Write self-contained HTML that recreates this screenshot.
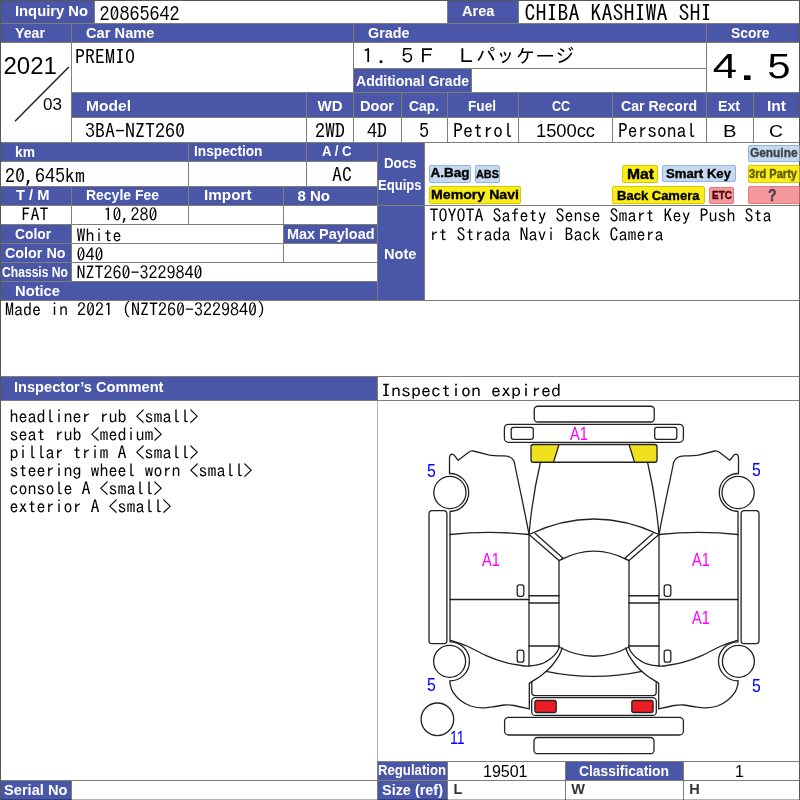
<!DOCTYPE html>
<html lang="en">
<head>
<meta charset="utf-8">
<title>Auction Sheet 20865642</title>
<style>
html,body{margin:0;padding:0;background:#fff}
#sheet{position:relative;width:800px;height:800px;overflow:hidden;will-change:transform}
.c{position:absolute;box-sizing:border-box;border:1px solid #7f7d74}
.h{background:#4a57a8}
.w{background:#fff}
.t{position:absolute;white-space:pre;line-height:1;transform-origin:0 0;display:block}
.b{position:absolute;box-sizing:border-box;border-radius:2px;border:1px solid}
svg{position:absolute;left:0;top:0}
#frame{position:absolute;left:0;top:0;width:800px;height:800px;box-sizing:border-box;border:1px solid rgba(0,0,20,.3);pointer-events:none}
</style>
</head>
<body>
<div id="sheet">
<div class="c h" style="left:0px;top:0px;width:95px;height:24px"></div>
<div class="c w" style="left:94px;top:0px;width:354px;height:24px"></div>
<div class="c h" style="left:447px;top:0px;width:72px;height:24px"></div>
<div class="c w" style="left:518px;top:0px;width:282px;height:24px"></div>
<div class="c h" style="left:0px;top:23px;width:72px;height:20px"></div>
<div class="c h" style="left:71px;top:23px;width:283px;height:20px"></div>
<div class="c h" style="left:353px;top:23px;width:354px;height:20px"></div>
<div class="c h" style="left:706px;top:23px;width:94px;height:20px"></div>
<div class="c w" style="left:0px;top:42px;width:72px;height:101px"></div>
<div class="c w" style="left:71px;top:42px;width:283px;height:51px"></div>
<div class="c w" style="left:353px;top:42px;width:354px;height:27px"></div>
<div class="c h" style="left:353px;top:68px;width:119px;height:25px"></div>
<div class="c w" style="left:471px;top:68px;width:236px;height:25px"></div>
<div class="c w" style="left:706px;top:42px;width:94px;height:51px"></div>
<div class="c h" style="left:71px;top:92px;width:236px;height:26px"></div>
<div class="c h" style="left:306px;top:92px;width:48px;height:26px"></div>
<div class="c h" style="left:353px;top:92px;width:49px;height:26px"></div>
<div class="c h" style="left:401px;top:92px;width:47px;height:26px"></div>
<div class="c h" style="left:447px;top:92px;width:72px;height:26px"></div>
<div class="c h" style="left:518px;top:92px;width:95px;height:26px"></div>
<div class="c h" style="left:612px;top:92px;width:95px;height:26px"></div>
<div class="c h" style="left:706px;top:92px;width:48px;height:26px"></div>
<div class="c h" style="left:753px;top:92px;width:47px;height:26px"></div>
<div class="c w" style="left:71px;top:117px;width:236px;height:26px"></div>
<div class="c w" style="left:306px;top:117px;width:48px;height:26px"></div>
<div class="c w" style="left:353px;top:117px;width:49px;height:26px"></div>
<div class="c w" style="left:401px;top:117px;width:47px;height:26px"></div>
<div class="c w" style="left:447px;top:117px;width:72px;height:26px"></div>
<div class="c w" style="left:518px;top:117px;width:95px;height:26px"></div>
<div class="c w" style="left:612px;top:117px;width:95px;height:26px"></div>
<div class="c w" style="left:706px;top:117px;width:48px;height:26px"></div>
<div class="c w" style="left:753px;top:117px;width:47px;height:26px"></div>
<div class="c h" style="left:0px;top:142px;width:189px;height:20px"></div>
<div class="c h" style="left:188px;top:142px;width:119px;height:20px"></div>
<div class="c h" style="left:306px;top:142px;width:72px;height:20px"></div>
<div class="c w" style="left:0px;top:161px;width:189px;height:26px"></div>
<div class="c w" style="left:188px;top:161px;width:119px;height:26px"></div>
<div class="c w" style="left:306px;top:161px;width:72px;height:26px"></div>
<div class="c h" style="left:0px;top:186px;width:72px;height:20px"></div>
<div class="c h" style="left:71px;top:186px;width:118px;height:20px"></div>
<div class="c h" style="left:188px;top:186px;width:96px;height:20px"></div>
<div class="c h" style="left:283px;top:186px;width:95px;height:20px"></div>
<div class="c w" style="left:0px;top:205px;width:72px;height:20px"></div>
<div class="c w" style="left:71px;top:205px;width:118px;height:20px"></div>
<div class="c w" style="left:188px;top:205px;width:96px;height:20px"></div>
<div class="c w" style="left:283px;top:205px;width:95px;height:20px"></div>
<div class="c h" style="left:0px;top:224px;width:72px;height:20px"></div>
<div class="c w" style="left:71px;top:224px;width:213px;height:20px"></div>
<div class="c h" style="left:283px;top:224px;width:95px;height:20px"></div>
<div class="c h" style="left:0px;top:243px;width:72px;height:20px"></div>
<div class="c w" style="left:71px;top:243px;width:213px;height:20px"></div>
<div class="c w" style="left:283px;top:243px;width:95px;height:20px"></div>
<div class="c h" style="left:0px;top:262px;width:72px;height:20px"></div>
<div class="c w" style="left:71px;top:262px;width:307px;height:20px"></div>
<div class="c h" style="left:0px;top:281px;width:378px;height:20px"></div>
<div class="c h" style="left:377px;top:142px;width:48px;height:64px"></div>
<div class="c h" style="left:377px;top:205px;width:48px;height:96px"></div>
<div class="c w" style="left:424px;top:142px;width:376px;height:64px"></div>
<div class="c w" style="left:424px;top:205px;width:376px;height:96px"></div>
<div class="c w" style="left:0px;top:300px;width:800px;height:77px"></div>
<div class="c h" style="left:0px;top:376px;width:378px;height:25px"></div>
<div class="c w" style="left:0px;top:400px;width:378px;height:381px"></div>
<div class="c w" style="left:377px;top:376px;width:423px;height:25px"></div>
<div class="c w" style="left:377px;top:400px;width:423px;height:362px"></div>
<div class="c h" style="left:0px;top:780px;width:72px;height:21px"></div>
<div class="c w" style="left:71px;top:780px;width:307px;height:21px"></div>
<div class="c h" style="left:377px;top:761px;width:71px;height:20px"></div>
<div class="c w" style="left:447px;top:761px;width:119px;height:20px"></div>
<div class="c h" style="left:565px;top:761px;width:119px;height:20px"></div>
<div class="c w" style="left:683px;top:761px;width:117px;height:20px"></div>
<div class="c h" style="left:377px;top:780px;width:71px;height:21px"></div>
<div class="c w" style="left:447px;top:780px;width:119px;height:21px"></div>
<div class="c w" style="left:565px;top:780px;width:119px;height:21px"></div>
<div class="c w" style="left:683px;top:780px;width:117px;height:21px"></div>
<!-- overlay lines -->
<svg width="800" height="800" viewBox="0 0 800 800" style="pointer-events:none">
<line x1="15" y1="121.3" x2="68.8" y2="67" stroke="#222" stroke-width="1.5"/>
<rect x="377" y="401" width="1" height="360" fill="#b4b4b4"/>
</svg>
<div class="b" style="left:428.5px;top:165px;width:42.7px;height:17.6px;background:#c5d9f1;border-color:#94b3de"></div>
<div class="b" style="left:474.8px;top:165px;width:25.4px;height:17.6px;background:#c5d9f1;border-color:#94b3de"></div>
<div class="b" style="left:428.5px;top:186px;width:92.7px;height:17.6px;background:#fbec1c;border-color:#d8ca00"></div>
<div class="b" style="left:621.5px;top:165.2px;width:36.5px;height:17.4px;background:#fbec1c;border-color:#d8ca00"></div>
<div class="b" style="left:661.5px;top:165px;width:74.5px;height:17.3px;background:#c5d9f1;border-color:#94b3de"></div>
<div class="b" style="left:612px;top:186.2px;width:93px;height:17.4px;background:#fbec1c;border-color:#d8ca00"></div>
<div class="b" style="left:708.8px;top:186.5px;width:25.4px;height:17.1px;background:#f4989c;border-color:#e07c80"></div>
<div class="b" style="left:747.5px;top:144.5px;width:54.5px;height:17px;background:#c5d9f1;border-color:#94b3de"></div>
<div class="b" style="left:747.5px;top:164.5px;width:54.5px;height:18px;background:#fbec1c;border-color:#d8ca00"></div>
<div class="b" style="left:747.5px;top:185.5px;width:54.5px;height:18.7px;background:#f4989c;border-color:#e07c80"></div>
<span class="t" style="left:15px;top:2.00px;font:700 15px 'Liberation Sans', sans-serif;color:#fff;transform:scaleX(0.9842)">Inquiry No</span>
<span class="t" style="left:462px;top:2.00px;font:700 15px 'Liberation Sans', sans-serif;color:#fff;transform:scaleX(0.9742)">Area</span>
<span class="t" style="left:15px;top:23.70px;font:700 15px 'Liberation Sans', sans-serif;color:#fff;transform:scaleX(0.9463)">Year</span>
<span class="t" style="left:85.5px;top:23.70px;font:700 15px 'Liberation Sans', sans-serif;color:#fff;transform:scaleX(0.9779)">Car Name</span>
<span class="t" style="left:367.5px;top:23.70px;font:700 15px 'Liberation Sans', sans-serif;color:#fff;transform:scaleX(0.9571)">Grade</span>
<span class="t" style="left:730.5px;top:23.70px;font:700 15px 'Liberation Sans', sans-serif;color:#fff;transform:scaleX(0.9232)">Score</span>
<span class="t" style="left:355.5px;top:71.70px;font:700 15px 'Liberation Sans', sans-serif;color:#fff;transform:scaleX(0.9351)">Additional Grade</span>
<span class="t" style="left:85.5px;top:96.70px;font:700 15px 'Liberation Sans', sans-serif;color:#fff;transform:scaleX(1.0382)">Model</span>
<span class="t" style="left:317.5px;top:96.70px;font:700 15px 'Liberation Sans', sans-serif;color:#fff">WD</span>
<span class="t" style="left:360px;top:96.70px;font:700 15px 'Liberation Sans', sans-serif;color:#fff;transform:scaleX(0.9714)">Door</span>
<span class="t" style="left:408.5px;top:96.70px;font:700 15px 'Liberation Sans', sans-serif;color:#fff;transform:scaleX(0.9226)">Cap.</span>
<span class="t" style="left:468px;top:96.70px;font:700 15px 'Liberation Sans', sans-serif;color:#fff;transform:scaleX(0.9078)">Fuel</span>
<span class="t" style="left:552px;top:96.70px;font:700 15px 'Liberation Sans', sans-serif;color:#fff;transform:scaleX(0.8306)">CC</span>
<span class="t" style="left:621px;top:96.70px;font:700 15px 'Liberation Sans', sans-serif;color:#fff;transform:scaleX(0.9399)">Car Record</span>
<span class="t" style="left:718px;top:96.70px;font:700 15px 'Liberation Sans', sans-serif;color:#fff;transform:scaleX(0.9424)">Ext</span>
<span class="t" style="left:767px;top:96.70px;font:700 15px 'Liberation Sans', sans-serif;color:#fff;transform:scaleX(1.0367)">Int</span>
<span class="t" style="left:15px;top:142.70px;font:700 15px 'Liberation Sans', sans-serif;color:#fff;transform:scaleX(0.9222)">km</span>
<span class="t" style="left:193.5px;top:142.20px;font:700 15px 'Liberation Sans', sans-serif;color:#fff;transform:scaleX(0.9131)">Inspection</span>
<span class="t" style="left:322px;top:142.20px;font:700 15px 'Liberation Sans', sans-serif;color:#fff;transform:scaleX(0.8773)">A / C</span>
<span class="t" style="left:15.5px;top:185.70px;font:700 15px 'Liberation Sans', sans-serif;color:#fff;transform:scaleX(0.9803)">T / M</span>
<span class="t" style="left:85.5px;top:185.70px;font:700 15px 'Liberation Sans', sans-serif;color:#fff;transform:scaleX(0.9312)">Recyle Fee</span>
<span class="t" style="left:203.5px;top:185.70px;font:700 15px 'Liberation Sans', sans-serif;color:#fff;transform:scaleX(1.0177)">Import</span>
<span class="t" style="left:297.5px;top:187.00px;font:700 15px 'Liberation Sans', sans-serif;color:#fff">8 No</span>
<span class="t" style="left:15px;top:225.20px;font:700 15px 'Liberation Sans', sans-serif;color:#fff;transform:scaleX(0.9190)">Color</span>
<span class="t" style="left:286.5px;top:225.40px;font:700 15px 'Liberation Sans', sans-serif;color:#fff;transform:scaleX(0.9629)">Max Payload</span>
<span class="t" style="left:5px;top:244.40px;font:700 15px 'Liberation Sans', sans-serif;color:#fff;transform:scaleX(0.9553)">Color No</span>
<span class="t" style="left:2px;top:263.20px;font:700 15px 'Liberation Sans', sans-serif;color:#fff;transform:scaleX(0.8078)">Chassis No</span>
<span class="t" style="left:14.5px;top:282.00px;font:700 15px 'Liberation Sans', sans-serif;color:#fff;transform:scaleX(0.9816)">Notice</span>
<span class="t" style="left:384px;top:153.70px;font:700 15px 'Liberation Sans', sans-serif;color:#fff;transform:scaleX(0.8859)">Docs</span>
<span class="t" style="left:378.3px;top:176.10px;font:700 15px 'Liberation Sans', sans-serif;color:#fff;transform:scaleX(0.8697)">Equips</span>
<span class="t" style="left:384px;top:245.20px;font:700 15px 'Liberation Sans', sans-serif;color:#fff;transform:scaleX(0.9747)">Note</span>
<span class="t" style="left:14.2px;top:378.20px;font:700 15px 'Liberation Sans', sans-serif;color:#fff;transform:scaleX(0.9747)">Inspector’s Comment</span>
<span class="t" style="left:3.7px;top:780.70px;font:700 15px 'Liberation Sans', sans-serif;color:#fff;transform:scaleX(0.9765)">Serial No</span>
<span class="t" style="left:378px;top:761.10px;font:700 15px 'Liberation Sans', sans-serif;color:#fff;transform:scaleX(0.8774)">Regulation</span>
<span class="t" style="left:382px;top:780.70px;font:700 15px 'Liberation Sans', sans-serif;color:#fff;transform:scaleX(0.9628)">Size (ref)</span>
<span class="t" style="left:579px;top:761.70px;font:700 15px 'Liberation Sans', sans-serif;color:#fff;transform:scaleX(0.9228)">Classification</span>
<span class="t" style="left:99.5px;top:3.40px;font:400 20px 'IPAGothic', 'Liberation Mono', monospace;color:#000">20865642</span>
<span class="t" style="left:524.5px;top:2.40px;font:400 22px 'IPAGothic', 'Liberation Mono', monospace;color:#000">CHIBA KASHIWA SHI</span>
<span class="t" style="left:75px;top:45.90px;font:400 20px 'IPAGothic', 'Liberation Mono', monospace;color:#000">PREMIO</span>
<span class="t" style="left:358px;top:46.40px;font:400 19.7px 'IPAGothic', 'Liberation Mono', monospace;color:#000">１．５Ｆ　Ｌパッケージ</span>
<span class="t" style="left:85px;top:119.70px;font:400 20px 'IPAGothic', 'Liberation Mono', monospace;color:#000">3BA-NZT260</span>
<span class="t" style="left:315px;top:119.70px;font:400 20px 'IPAGothic', 'Liberation Mono', monospace;color:#000">2WD</span>
<span class="t" style="left:367px;top:119.70px;font:400 20px 'IPAGothic', 'Liberation Mono', monospace;color:#000">4D</span>
<span class="t" style="left:419px;top:119.70px;font:400 20px 'IPAGothic', 'Liberation Mono', monospace;color:#000">5</span>
<span class="t" style="left:453px;top:119.90px;font:400 20px 'IPAGothic', 'Liberation Mono', monospace;color:#000">Petrol</span>
<span class="t" style="left:618px;top:119.90px;font:400 20px 'IPAGothic', 'Liberation Mono', monospace;color:#000;transform:scaleX(0.9750)">Personal</span>
<span class="t" style="left:5px;top:165.40px;font:400 20px 'IPAGothic', 'Liberation Mono', monospace;color:#000">20,645km</span>
<span class="t" style="left:332px;top:164.00px;font:400 20px 'IPAGothic', 'Liberation Mono', monospace;color:#000">AC</span>
<span class="t" style="left:21.5px;top:205.40px;font:400 18px 'IPAGothic', 'Liberation Mono', monospace;color:#000">FAT</span>
<span class="t" style="left:103.5px;top:205.40px;font:400 18px 'IPAGothic', 'Liberation Mono', monospace;color:#000">10,280</span>
<span class="t" style="left:76.5px;top:226.10px;font:400 18px 'IPAGothic', 'Liberation Mono', monospace;color:#000">White</span>
<span class="t" style="left:76.5px;top:244.90px;font:400 18px 'IPAGothic', 'Liberation Mono', monospace;color:#000">040</span>
<span class="t" style="left:76.5px;top:263.40px;font:400 18px 'IPAGothic', 'Liberation Mono', monospace;color:#000">NZT260-3229840</span>
<span class="t" style="left:5px;top:300.40px;font:400 18px 'IPAGothic', 'Liberation Mono', monospace;color:#000">Made in 2021 (NZT260-3229840)</span>
<span class="t" style="left:429.5px;top:205.90px;font:400 18px 'IPAGothic', 'Liberation Mono', monospace;color:#000">TOYOTA Safety Sense Smart Key Push Sta</span>
<span class="t" style="left:429.5px;top:224.90px;font:400 18px 'IPAGothic', 'Liberation Mono', monospace;color:#000">rt Strada Navi Back Camera</span>
<span class="t" style="left:381px;top:381.50px;font:400 17.5px 'IPAGothic', 'Liberation Mono', monospace;color:#000;transform:scaleX(1.1429)">Inspection expired</span>
<span class="t" style="left:9.5px;top:407.10px;font:400 18px 'IPAGothic', 'Liberation Mono', monospace;color:#000">headliner rub &lt;small&gt;</span>
<span class="t" style="left:9.5px;top:425.10px;font:400 18px 'IPAGothic', 'Liberation Mono', monospace;color:#000">seat rub &lt;medium&gt;</span>
<span class="t" style="left:9.5px;top:443.00px;font:400 18px 'IPAGothic', 'Liberation Mono', monospace;color:#000">pillar trim A &lt;small&gt;</span>
<span class="t" style="left:9.5px;top:461.00px;font:400 18px 'IPAGothic', 'Liberation Mono', monospace;color:#000">steering wheel worn &lt;small&gt;</span>
<span class="t" style="left:9.5px;top:479.00px;font:400 18px 'IPAGothic', 'Liberation Mono', monospace;color:#000">console A &lt;small&gt;</span>
<span class="t" style="left:9.5px;top:496.90px;font:400 18px 'IPAGothic', 'Liberation Mono', monospace;color:#000">exterior A &lt;small&gt;</span>
<span class="t" style="left:712.6px;top:49.50px;font:400 49px 'IPAGothic', 'Liberation Mono', monospace;color:#000;transform:scale(1.0000,0.7000);letter-spacing:2.5px">4.5</span>
<span class="t" style="left:3.5px;top:52.30px;font:400 24px 'Liberation Sans', sans-serif;color:#000">2021</span>
<span class="t" style="left:43px;top:95.00px;font:400 17px 'Liberation Sans', sans-serif;color:#000">03</span>
<span class="t" style="left:536px;top:120.80px;font:400 17.5px 'Liberation Sans', sans-serif;color:#000;transform:scaleX(1.0454)">1500cc</span>
<span class="t" style="left:722.5px;top:121.70px;font:400 17px 'Liberation Sans', sans-serif;color:#000;transform:scaleX(1.1901)">B</span>
<span class="t" style="left:769px;top:121.70px;font:400 17px 'Liberation Sans', sans-serif;color:#000;transform:scaleX(1.1399)">C</span>
<span class="t" style="left:483px;top:763.00px;font:400 16px 'Liberation Sans', sans-serif;color:#000">19501</span>
<span class="t" style="left:735px;top:763.00px;font:400 16px 'Liberation Sans', sans-serif;color:#000">1</span>
<span class="t" style="left:453.5px;top:780.90px;font:700 14.5px 'Liberation Sans', sans-serif;color:#333">L</span>
<span class="t" style="left:571.3px;top:780.90px;font:700 14.5px 'Liberation Sans', sans-serif;color:#333">W</span>
<span class="t" style="left:689.3px;top:780.90px;font:700 14.5px 'Liberation Sans', sans-serif;color:#333">H</span>
<span class="t" style="left:430.5px;top:165.40px;font:700 13.5px 'Liberation Sans', sans-serif;color:#000;-webkit-text-stroke:0.35px #000">A.Bag</span>
<span class="t" style="left:476.2px;top:168.00px;font:700 11.5px 'Liberation Sans', sans-serif;color:#000;transform:scaleX(0.9472);-webkit-text-stroke:0.35px #000">ABS</span>
<span class="t" style="left:430.7px;top:186.60px;font:700 13.5px 'Liberation Sans', sans-serif;color:#000;transform:scaleX(1.0470);-webkit-text-stroke:0.35px #000">Memory Navi</span>
<span class="t" style="left:626.5px;top:166.30px;font:700 14.5px 'Liberation Sans', sans-serif;color:#000;transform:scaleX(1.0807);-webkit-text-stroke:0.35px #000">Mat</span>
<span class="t" style="left:666px;top:165.60px;font:700 13.5px 'Liberation Sans', sans-serif;color:#000;transform:scaleX(0.9731);-webkit-text-stroke:0.35px #000">Smart Key</span>
<span class="t" style="left:617px;top:188.30px;font:700 13.5px 'Liberation Sans', sans-serif;color:#000;transform:scaleX(0.9642);-webkit-text-stroke:0.35px #000">Back Camera</span>
<span class="t" style="left:711.5px;top:189.40px;font:700 11.5px 'Liberation Sans', sans-serif;color:#4a0008;transform:scaleX(0.8696);-webkit-text-stroke:0.35px #4a0008">ETC</span>
<span class="t" style="left:749.5px;top:146.20px;font:700 12.5px 'Liberation Sans', sans-serif;color:#404448;transform:scaleX(0.9497);-webkit-text-stroke:0.35px #404448">Genuine</span>
<span class="t" style="left:749px;top:166.90px;font:700 12.5px 'Liberation Sans', sans-serif;color:#5e5a00;transform:scaleX(0.8856);-webkit-text-stroke:0.35px #5e5a00">3rd Party</span>
<span class="t" style="left:768px;top:186.70px;font:700 16px 'Liberation Sans', sans-serif;color:#444;transform:scaleX(0.8690);-webkit-text-stroke:0.35px #444">?</span>
<span class="t" style="left:570px;top:423.00px;font:400 18.5px 'Liberation Sans', sans-serif;color:#ff00ff;transform:scaleX(0.7862)">A1</span>
<span class="t" style="left:482.2px;top:548.80px;font:400 18.5px 'Liberation Sans', sans-serif;color:#ff00ff;transform:scaleX(0.7862)">A1</span>
<span class="t" style="left:691.7px;top:548.80px;font:400 18.5px 'Liberation Sans', sans-serif;color:#ff00ff;transform:scaleX(0.7862)">A1</span>
<span class="t" style="left:691.7px;top:607.30px;font:400 18.5px 'Liberation Sans', sans-serif;color:#ff00ff;transform:scaleX(0.7862)">A1</span>
<span class="t" style="left:426.9px;top:460.50px;font:400 18px 'Liberation Sans', sans-serif;color:#0000ff;transform:scaleX(0.8786)">5</span>
<span class="t" style="left:751.9px;top:460.40px;font:400 18px 'Liberation Sans', sans-serif;color:#0000ff;transform:scaleX(0.8786)">5</span>
<span class="t" style="left:426.9px;top:675.40px;font:400 18px 'Liberation Sans', sans-serif;color:#0000ff;transform:scaleX(0.8786)">5</span>
<span class="t" style="left:751.9px;top:675.70px;font:400 18px 'Liberation Sans', sans-serif;color:#0000ff;transform:scaleX(0.8786)">5</span>
<span class="t" style="left:449.6px;top:728.40px;font:400 18px 'Liberation Sans', sans-serif;color:#0000ff;transform:scaleX(0.7813)">11</span>
<svg width="800" height="800" viewBox="0 0 800 800" style="pointer-events:none">
<g stroke="#222" stroke-width="1.3" stroke-linecap="round" stroke-linejoin="round">
<rect x="534.25" y="406.25" width="120.00" height="15.75" rx="3.50" fill="none"/>
<rect x="504.40" y="424.40" width="179.00" height="17.90" rx="4.00" fill="none"/>
<rect x="504.60" y="717.40" width="178.80" height="17.60" rx="4.00" fill="none"/>
<rect x="534.00" y="737.50" width="120.00" height="16.20" rx="3.50" fill="none"/>
<rect x="531.70" y="697.70" width="124.60" height="17.70" rx="3.50" fill="none"/>
<path d="M559,444.5 L629,444.5 M553.5,462.25 L634.5,462.25" fill="none"/>
<path d="M529,534.5 Q594,503.5 659,534.5" fill="none"/>
<path d="M561,559.6 Q594,542.6 627,559.6" fill="none"/>
<path d="M559,647 Q594,665.5 629,647" fill="none"/>
<path d="M546,671.3 Q594,681.5 642,671.3" fill="none"/>
<path d="M531.8,682 L531.8,692.3 Q531.8,695.6 535.2,695.6 L652.8,695.6 Q656.2,695.6 656.2,692.3 L656.2,682" fill="none"/>
<g>
<rect x="511.20" y="427.40" width="22.10" height="11.90" rx="2.20" fill="none"/>
<path d="M533.2,444.5 L559,444.5 L553.5,462.25 L533.2,462.25 Q531,462.25 531,460 L531,446.7 Q531,444.5 533.2,444.5 Z" fill="#efe21c"/>
<path d="M540.3,463 C536.3,480 531.5,506 529,534.5" fill="none"/>
<path d="M449.5,473.5 L449.5,458.6 C449.5,455.6 450.6,454.2 452.4,454.2 C454.6,454.2 455.4,457.3 458.3,460.3 L468.3,452.4 C469.8,451.2 471.3,450.6 473.3,451 L489.5,455.1 C493,455.8 498,455.8 503.5,455.8 C509.5,455.8 512.8,457.6 514.4,462.5 C519,486 525,512 529,534.5" fill="none"/>
<path d="M449.5,473.5 A19,19 0 0 1 450,511.5 L450,641.8 A19.5,19.5 0 0 1 450,680.8" fill="none"/>
<circle cx="449.90" cy="492.50" r="16.10" fill="none"/>
<circle cx="449.60" cy="661.30" r="16.00" fill="none"/>
<rect x="429.00" y="510.60" width="17.90" height="133.00" rx="3.20" fill="none"/>
<path d="M450,534.5 Q489,530.3 529,534.5" fill="none"/>
<path d="M450,599.5 L529,599.5" fill="none"/>
<path d="M529,534.5 L529,666.2" fill="none"/>
<path d="M450.60,640.30 C453.32,641.25 461.07,643.50 466.90,646.00 C472.73,648.50 479.35,652.60 485.60,655.30 C491.85,658.00 498.77,660.55 504.40,662.20 C510.03,663.85 515.33,664.57 519.40,665.20 C523.47,665.83 525.05,666.25 528.80,666.00 C532.55,665.75 538.03,665.12 541.90,663.70 C545.77,662.28 549.43,659.53 552.00,657.50 C554.57,655.47 556.08,653.25 557.30,651.50 C558.52,649.75 558.97,647.75 559.30,647.00" fill="none"/>
<path d="M562.30,648.00 C561.70,649.37 560.55,653.12 558.70,656.20 C556.85,659.28 554.00,663.37 551.20,666.50 C548.40,669.63 544.85,672.65 541.90,675.00 C538.95,677.35 535.60,679.23 533.50,680.60 C531.40,681.97 530.00,682.77 529.30,683.20 L529.3,708.8" fill="none"/>
<path d="M450.00,680.80 C450.05,681.50 449.83,683.15 450.30,685.00 C450.77,686.85 451.13,689.35 452.80,691.90 C454.47,694.45 457.33,697.95 460.30,700.30 C463.27,702.65 467.00,704.75 470.60,706.00 C474.20,707.25 477.83,707.72 481.90,707.80 C485.97,707.88 491.25,706.97 495.00,706.50 C498.75,706.03 501.28,705.17 504.40,705.00 C507.52,704.83 509.55,704.87 513.70,705.50 C517.85,706.13 526.70,708.25 529.30,708.80" fill="none"/>
<rect x="517.20" y="584.80" width="6.60" height="11.50" rx="2.20" fill="none"/>
<rect x="517.20" y="650.20" width="6.60" height="11.90" rx="2.20" fill="none"/>
<path d="M529,595.75 L559,595.75 M529,603 L559,603 M529,646 L559.4,646" fill="none"/>
<path d="M559,560.6 L559,647" fill="none"/>
<path d="M529.3,534.8 L559,560.6 L563.4,558.4 L535.2,533.5" fill="none"/>
<rect x="534.90" y="700.50" width="21.30" height="12.00" rx="2.00" fill="#ec1c24"/>
</g>
<g transform="translate(1188,0) scale(-1,1)">
<rect x="511.20" y="427.40" width="22.10" height="11.90" rx="2.20" fill="none"/>
<path d="M533.2,444.5 L559,444.5 L553.5,462.25 L533.2,462.25 Q531,462.25 531,460 L531,446.7 Q531,444.5 533.2,444.5 Z" fill="#efe21c"/>
<path d="M540.3,463 C536.3,480 531.5,506 529,534.5" fill="none"/>
<path d="M449.5,473.5 L449.5,458.6 C449.5,455.6 450.6,454.2 452.4,454.2 C454.6,454.2 455.4,457.3 458.3,460.3 L468.3,452.4 C469.8,451.2 471.3,450.6 473.3,451 L489.5,455.1 C493,455.8 498,455.8 503.5,455.8 C509.5,455.8 512.8,457.6 514.4,462.5 C519,486 525,512 529,534.5" fill="none"/>
<path d="M449.5,473.5 A19,19 0 0 1 450,511.5 L450,641.8 A19.5,19.5 0 0 1 450,680.8" fill="none"/>
<circle cx="449.90" cy="492.50" r="16.10" fill="none"/>
<circle cx="449.60" cy="661.30" r="16.00" fill="none"/>
<rect x="429.00" y="510.60" width="17.90" height="133.00" rx="3.20" fill="none"/>
<path d="M450,534.5 Q489,530.3 529,534.5" fill="none"/>
<path d="M450,599.5 L529,599.5" fill="none"/>
<path d="M529,534.5 L529,666.2" fill="none"/>
<path d="M450.60,640.30 C453.32,641.25 461.07,643.50 466.90,646.00 C472.73,648.50 479.35,652.60 485.60,655.30 C491.85,658.00 498.77,660.55 504.40,662.20 C510.03,663.85 515.33,664.57 519.40,665.20 C523.47,665.83 525.05,666.25 528.80,666.00 C532.55,665.75 538.03,665.12 541.90,663.70 C545.77,662.28 549.43,659.53 552.00,657.50 C554.57,655.47 556.08,653.25 557.30,651.50 C558.52,649.75 558.97,647.75 559.30,647.00" fill="none"/>
<path d="M562.30,648.00 C561.70,649.37 560.55,653.12 558.70,656.20 C556.85,659.28 554.00,663.37 551.20,666.50 C548.40,669.63 544.85,672.65 541.90,675.00 C538.95,677.35 535.60,679.23 533.50,680.60 C531.40,681.97 530.00,682.77 529.30,683.20 L529.3,708.8" fill="none"/>
<path d="M450.00,680.80 C450.05,681.50 449.83,683.15 450.30,685.00 C450.77,686.85 451.13,689.35 452.80,691.90 C454.47,694.45 457.33,697.95 460.30,700.30 C463.27,702.65 467.00,704.75 470.60,706.00 C474.20,707.25 477.83,707.72 481.90,707.80 C485.97,707.88 491.25,706.97 495.00,706.50 C498.75,706.03 501.28,705.17 504.40,705.00 C507.52,704.83 509.55,704.87 513.70,705.50 C517.85,706.13 526.70,708.25 529.30,708.80" fill="none"/>
<rect x="517.20" y="584.80" width="6.60" height="11.50" rx="2.20" fill="none"/>
<rect x="517.20" y="650.20" width="6.60" height="11.90" rx="2.20" fill="none"/>
<path d="M529,595.75 L559,595.75 M529,603 L559,603 M529,646 L559.4,646" fill="none"/>
<path d="M559,560.6 L559,647" fill="none"/>
<path d="M529.3,534.8 L559,560.6 L563.4,558.4 L535.2,533.5" fill="none"/>
<rect x="534.90" y="700.50" width="21.30" height="12.00" rx="2.00" fill="#ec1c24"/>
</g>
<circle cx="437.4" cy="719.3" r="16.3" fill="none"/>
</g>
</svg>
<div id="frame"></div>
</div>
</body>
</html>
